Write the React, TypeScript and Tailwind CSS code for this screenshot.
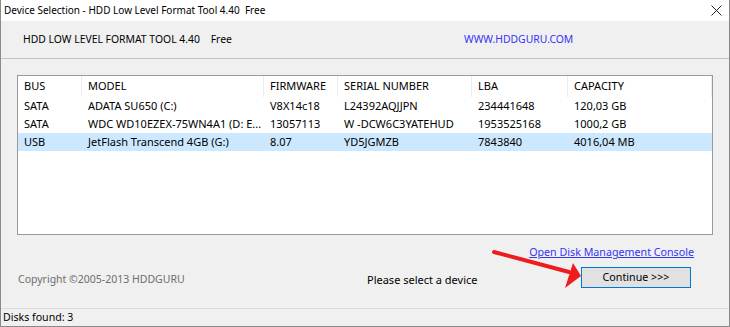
import React from 'react';

const font = { fontFamily: '"Noto Sans", "Segoe UI", Arial, sans-serif' };

const rows = [
  { bus: 'SATA', model: 'ADATA SU650 (C:)', fw: 'V8X14c18', serial: 'L24392AQJJPN', lba: '234441648', cap: '120,03 GB' },
  { bus: 'SATA', model: 'WDC WD10EZEX-75WN4A1 (D: E...', fw: '13057113', serial: 'W -DCW6C3YATEHUD', lba: '1953525168', cap: '1000,2 GB' },
  { bus: 'USB', model: 'JetFlash Transcend 4GB (G:)', fw: '8.07', serial: 'YD5JGMZB', lba: '7843840', cap: '4016,04 MB', selected: true },
];

const cols = 'grid grid-cols-[64px_182px_74px_134px_96px_1fr]';

const App = () => {
  return (
    <div
      className="w-[730px] h-[327px] bg-[#f0f0f0] border-x border-b border-[#8a8a8a] flex flex-col text-[10.6px] text-black overflow-hidden relative"
      style={font}
    >
      {/* title bar */}
      <div className="h-[21px] bg-white flex items-center justify-between pl-[3px] pr-[6px] shrink-0">
        <span className="whitespace-pre text-[10px]">Device Selection - HDD Low Level Format Tool 4.40  Free</span>
        <svg width="11" height="11" viewBox="0 0 11 11" className="mr-[1px]">
          <path d="M0.5 0.5 L10.5 10.5 M10.5 0.5 L0.5 10.5" stroke="#222" strokeWidth="1" />
        </svg>
      </div>

      {/* header */}
      <div className="h-[38px] flex items-center border-b border-[#c4c4c4] shrink-0 text-[10.4px]">
        <span className="pl-[22px] w-[463px] whitespace-pre">HDD LOW LEVEL FORMAT TOOL 4.40    Free</span>
        <span className="text-[#3535f5]">WWW.HDDGURU.COM</span>
      </div>

      {/* device list */}
      <div className="mt-[16px] ml-[16px] w-[696px] h-[160px] bg-white border border-[#9a9a9a] shrink-0 text-[11px]">
        <div className={`${cols} h-[21px] items-center`}>
          {['BUS', 'MODEL', 'FIRMWARE', 'SERIAL NUMBER', 'LBA', 'CAPACITY'].map((h) => (
            <div key={h} className="pl-[6px] border-r border-[#ececec] h-full flex items-center">
              {h}
            </div>
          ))}
        </div>
        {rows.map((r) => (
          <div key={r.serial} className={`${cols} h-[18px] items-center ${r.selected ? 'bg-[#cce8ff]' : ''}`}>
            <div className="pl-[6px]">{r.bus}</div>
            <div className="pl-[6px] whitespace-nowrap overflow-hidden">{r.model}</div>
            <div className="pl-[6px]">{r.fw}</div>
            <div className="pl-[6px]">{r.serial}</div>
            <div className="pl-[6px]">{r.lba}</div>
            <div className="pl-[6px]">{r.cap}</div>
          </div>
        ))}
      </div>

      {/* footer */}
      <div className="flex-1 relative">
        <div className="flex justify-end pr-[35px] pt-[9px]">
          <span className="text-[#3535f5] underline text-[10.7px]">Open Disk Management Console</span>
        </div>
        <div className="flex items-center mt-[6px]">
          <span className="pl-[17px] w-[366px] text-[#6e6e6e] text-[10.5px] pt-[6px]">Copyright ©2005-2013 HDDGURU</span>
          <span className="w-[214px] text-[11px] pt-[6px]">Please select a device</span>
          <div className="w-[110px] h-[21px] bg-[#e1e1e1] border border-[#0078d7] flex items-center justify-center text-[10.7px]">
            Continue &gt;&gt;&gt;
          </div>
        </div>
        <svg className="absolute left-[488px] top-[11px]" width="100" height="44" viewBox="0 0 100 44">
          <path d="M5 6 L80 26" stroke="#ee1c1c" strokeWidth="4" strokeLinecap="round" />
          <path d="M92 30 L84 17 L76 42 Z" fill="#ee1c1c" />
        </svg>
      </div>

      {/* status bar */}
      <div className="h-[18px] border-t border-[#dcdcdc] flex items-center pl-[2px] shrink-0">
        Disks found: 3
      </div>
    </div>
  );
};

export default App;
